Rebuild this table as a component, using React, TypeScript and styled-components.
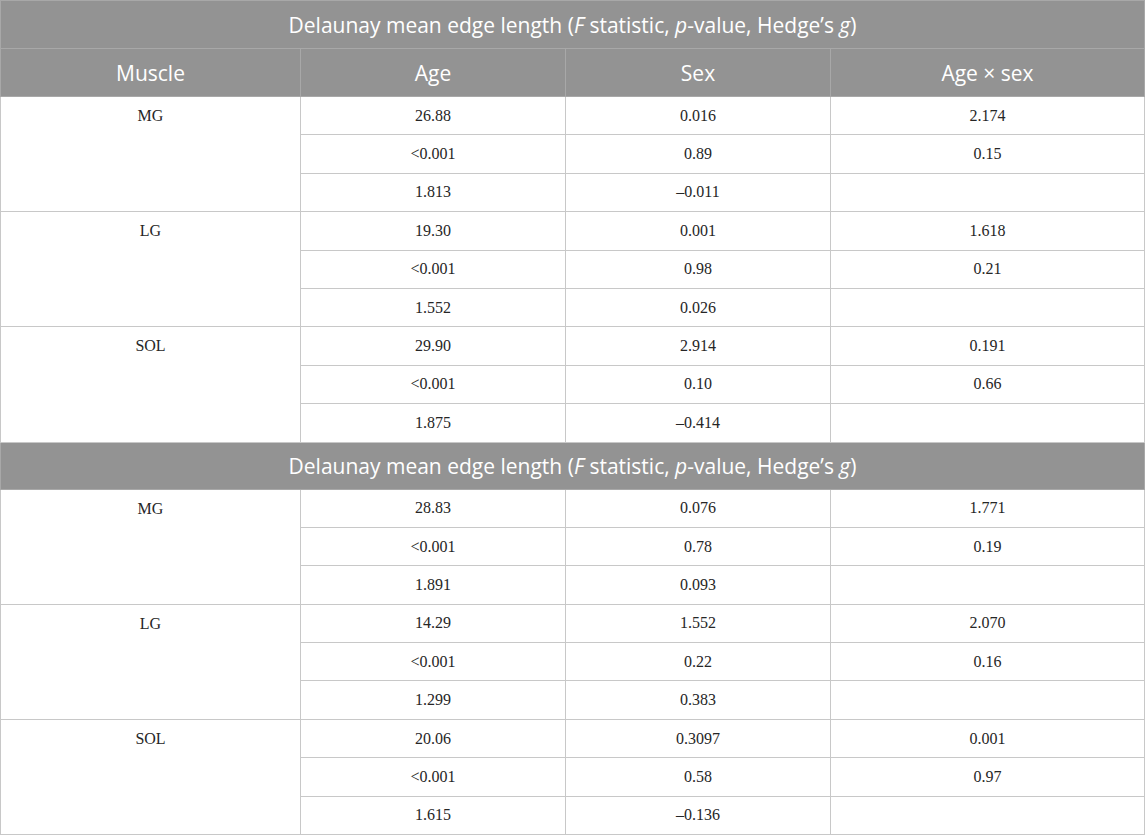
import React from "react";
import styled, { createGlobalStyle } from "styled-components";

const Global = createGlobalStyle`
  html, body { margin: 0; padding: 0; background: #ffffff; }
  body { width: 1145px; height: 836px; overflow: hidden; }
`;

const Table = styled.table`
  width: 1144px;
  border-collapse: collapse;
  table-layout: fixed;
  font-family: "Liberation Serif", "Times New Roman", serif;
`;

const TitleRow = styled.tr<{ $h: number }>`
  height: ${(p) => p.$h}px;
`;

const TitleCell = styled.th`
  background: #939393;
  color: #ffffff;
  font-family: "Open Sans", "Noto Sans", sans-serif;
  font-weight: 400;
  font-size: 21px;
  text-align: center;
  vertical-align: middle;
  padding: 0;
  border: 1px solid #a8a8a8;
  em {
    font-style: italic;
  }
`;

const HeadCell = styled(TitleCell)``;

const BodyRow = styled.tr`
  height: 38.4px;
`;

const Cell = styled.td`
  border: 1px solid #c8c8c8;
  padding: 0;
  text-align: center;
  vertical-align: middle;
  font-size: 16px;
  color: #262626;
  line-height: 18px;
`;

const MuscleCell = styled(Cell)`
  vertical-align: top;
  padding-top: 10px;
`;

type Group = { muscle: string; rows: string[][] };

const sections: Group[][] = [
  [
    { muscle: "MG", rows: [["26.88", "0.016", "2.174"], ["<0.001", "0.89", "0.15"], ["1.813", "–0.011", ""]] },
    { muscle: "LG", rows: [["19.30", "0.001", "1.618"], ["<0.001", "0.98", "0.21"], ["1.552", "0.026", ""]] },
    { muscle: "SOL", rows: [["29.90", "2.914", "0.191"], ["<0.001", "0.10", "0.66"], ["1.875", "–0.414", ""]] },
  ],
  [
    { muscle: "MG", rows: [["28.83", "0.076", "1.771"], ["<0.001", "0.78", "0.19"], ["1.891", "0.093", ""]] },
    { muscle: "LG", rows: [["14.29", "1.552", "2.070"], ["<0.001", "0.22", "0.16"], ["1.299", "0.383", ""]] },
    { muscle: "SOL", rows: [["20.06", "0.3097", "0.001"], ["<0.001", "0.58", "0.97"], ["1.615", "–0.136", ""]] },
  ],
];

const Title = () => (
  <>
    Delaunay mean edge length (<em>F</em> statistic, <em>p</em>-value, Hedge’s <em>g</em>)
  </>
);

const Section = ({ groups }: { groups: Group[] }) => (
  <>
    {groups.map((g) =>
      g.rows.map((r, i) => (
        <BodyRow key={g.muscle + i}>
          {i === 0 && <MuscleCell rowSpan={3}>{g.muscle}</MuscleCell>}
          {r.map((v, j) => (
            <Cell key={j}>{v}</Cell>
          ))}
        </BodyRow>
      ))
    )}
  </>
);

export default function App() {
  return (
    <>
      <Global />
      <Table>
        <colgroup>
          <col style={{ width: 300 }} />
          <col style={{ width: 265 }} />
          <col style={{ width: 265 }} />
          <col style={{ width: 314 }} />
        </colgroup>
        <thead>
          <TitleRow $h={48}>
            <TitleCell colSpan={4}>
              <Title />
            </TitleCell>
          </TitleRow>
          <TitleRow $h={48}>
            <HeadCell>Muscle</HeadCell>
            <HeadCell>Age</HeadCell>
            <HeadCell>Sex</HeadCell>
            <HeadCell>Age × sex</HeadCell>
          </TitleRow>
        </thead>
        <tbody>
          <Section groups={sections[0]} />
          <TitleRow $h={47}>
            <TitleCell colSpan={4}>
              <Title />
            </TitleCell>
          </TitleRow>
          <Section groups={sections[1]} />
        </tbody>
      </Table>
    </>
  );
}
